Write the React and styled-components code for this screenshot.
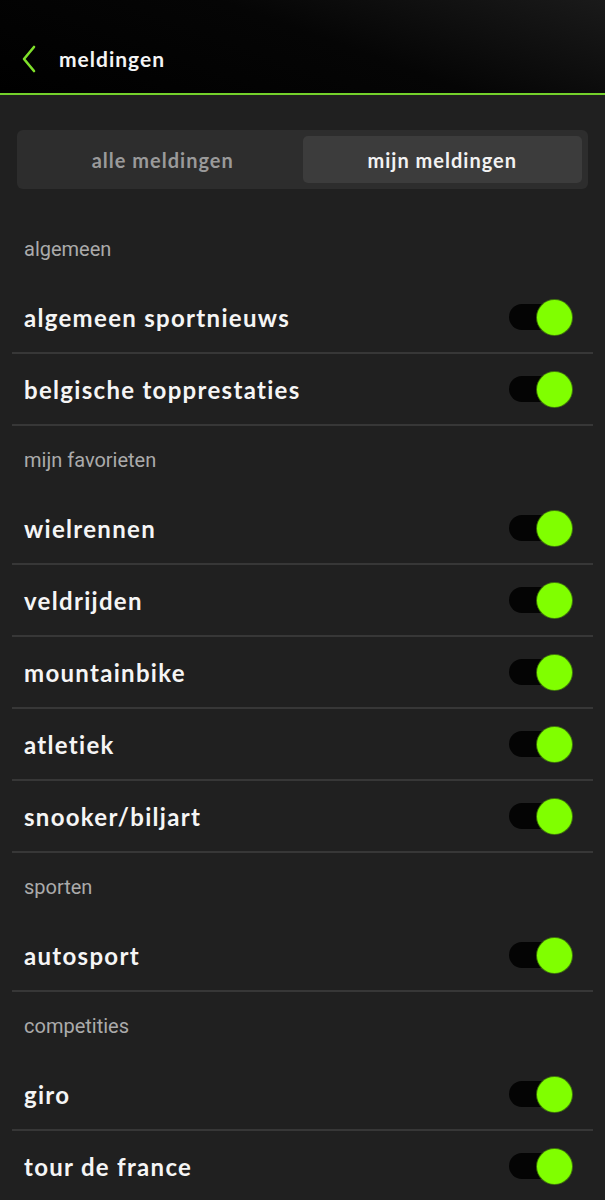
import React from 'react';
import styled, { createGlobalStyle } from 'styled-components';

const GlobalStyle = createGlobalStyle`
  body {
    margin: 0;
    background: #202020;
    font-family: 'Lato', 'Liberation Sans', sans-serif;
  }
`;

const Screen = styled.div`
  min-height: 100vh;
  background: #202020;
`;

const Header = styled.header`
  height: 95px;
  display: flex;
  align-items: center;
  gap: 22px;
  padding: 24px 0 0 21px;
  box-sizing: border-box;
  background: linear-gradient(200deg, #1a1a1a 0%, #050505 45%, #000 100%);
  border-bottom: 2px solid #74d12b;
`;

const BackButton = styled.button`
  background: none;
  border: 0;
  padding: 0;
  display: flex;
  cursor: pointer;
`;

const Title = styled.h1`
  margin: 0;
  color: #f4f4f4;
  font-size: 21px;
  font-weight: 700;
  letter-spacing: 1px;
`;

const Main = styled.main`
  padding: 0 12px;
`;

const Tabs = styled.div`
  margin: 35px 5px 26px;
  height: 59px;
  box-sizing: border-box;
  padding: 6px;
  border-radius: 6px;
  background: #2d2d2d;
  display: grid;
  grid-template-columns: 1fr 1fr;
`;

const Tab = styled.button`
  border: 0;
  border-radius: 5px;
  font-family: 'Lato', sans-serif;
  font-size: 20px;
  font-weight: 700;
  letter-spacing: 1px;
  cursor: pointer;
  background: ${p => (p.$active ? '#3c3c3c' : 'transparent')};
  color: ${p => (p.$active ? '#f2f2f2' : '#9a9a9a')};
`;

const SectionLabel = styled.div`
  height: 67px;
  box-sizing: border-box;
  padding: 23px 12px 0;
  font-family: 'Roboto', 'Liberation Sans', sans-serif;
  font-size: 20px;
  line-height: 22px;
  color: #ababab;
`;

const Row = styled.div`
  height: 72px;
  box-sizing: border-box;
  display: flex;
  align-items: center;
  justify-content: space-between;
  padding: 0 21px 0 12px;
  border-bottom: 2px solid #373737;
`;

const RowText = styled.span`
  color: #f5f5f5;
  font-size: 24px;
  font-weight: 700;
  letter-spacing: 1.3px;
`;

const Track = styled.span`
  position: relative;
  width: 57px;
  height: 26px;
  border-radius: 13px;
  background: #040404;
  margin-right: 6px;
`;

const Knob = styled.span`
  position: absolute;
  right: -6px;
  top: 50%;
  width: 35px;
  height: 35px;
  margin-top: -17.5px;
  border-radius: 50%;
  background: #80ff00;
  box-shadow: 0 0 0 1px rgba(90, 180, 0, 0.6);
`;

const Toggle = () => (
  <Track>
    <Knob />
  </Track>
);

const sections = [
  { label: 'algemeen', items: ['algemeen sportnieuws', 'belgische topprestaties'] },
  { label: 'mijn favorieten', items: ['wielrennen', 'veldrijden', 'mountainbike', 'atletiek', 'snooker/biljart'] },
  { label: 'sporten', items: ['autosport'] },
  { label: 'competities', items: ['giro', 'tour de france'] },
];

export default function App() {
  return (
    <Screen>
      <GlobalStyle />
      <Header>
        <BackButton aria-label="terug">
          <svg width="16" height="28" viewBox="0 0 16 28" fill="none">
            <path d="M13 2 L3 14 L13 26" stroke="#7fe02a" strokeWidth="2.6" strokeLinecap="round" strokeLinejoin="round" />
          </svg>
        </BackButton>
        <Title>meldingen</Title>
      </Header>
      <Main>
        <Tabs>
          <Tab>alle meldingen</Tab>
          <Tab $active>mijn meldingen</Tab>
        </Tabs>
        {sections.map(s => (
          <section key={s.label}>
            <SectionLabel>{s.label}</SectionLabel>
            {s.items.map(item => (
              <Row key={item}>
                <RowText>{item}</RowText>
                <Toggle />
              </Row>
            ))}
          </section>
        ))}
      </Main>
    </Screen>
  );
}
